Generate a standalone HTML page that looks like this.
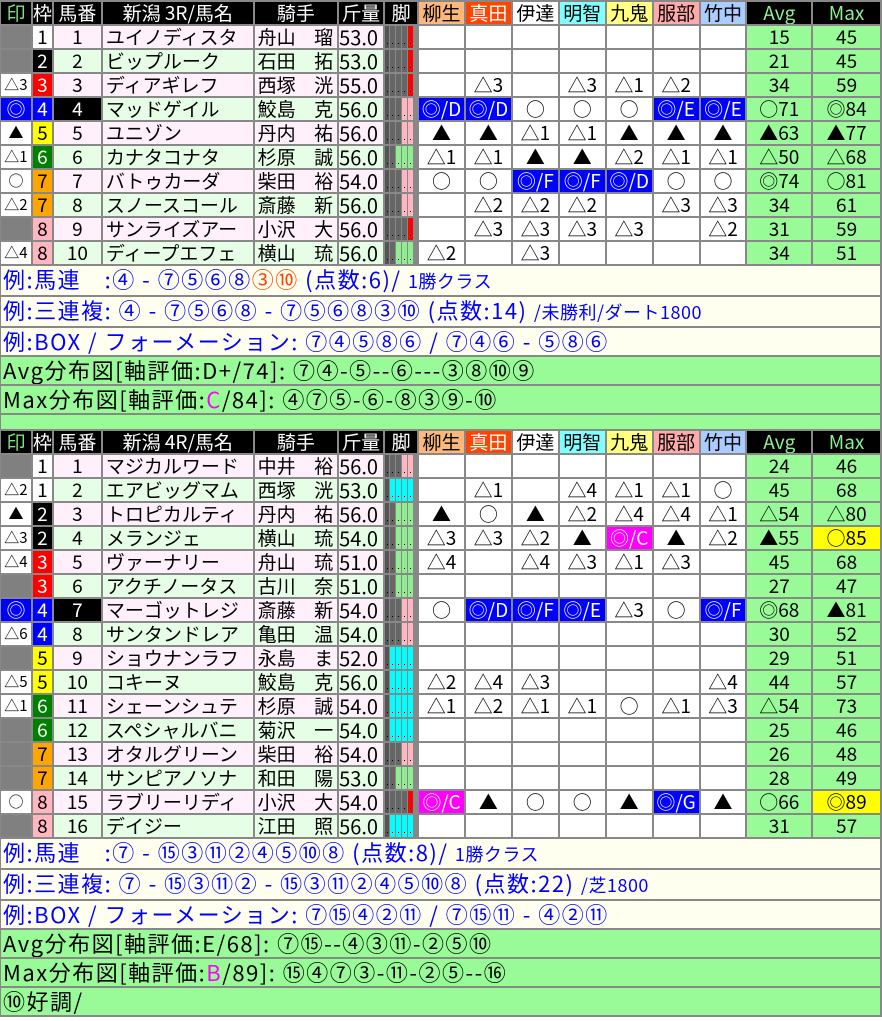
<!DOCTYPE html>
<html><head><meta charset="utf-8">
<style>
html,body{margin:0;padding:0;background:#fff;}
body{width:882px;height:1021px;overflow:hidden;font-family:"Liberation Sans","Noto Sans CJK JP",sans-serif;}
table{border-collapse:separate;border-spacing:2px;background:#888;table-layout:fixed;margin:0 0 0 -1px;font-family:"Noto Sans CJK JP","Liberation Sans",sans-serif;}
td{padding:0;height:22px;line-height:22px;font-size:19px;text-align:center;white-space:nowrap;overflow:hidden;color:#000;background:#fff;}
tr.h td{background:#000;color:#fff;}
tr.h td.gi{color:#7fe07f;}
tr.h td.ga{color:#90ee90;}
td.y1{background:#fbb87a!important;color:#000!important}
td.y2{background:#ff4500!important;color:#fff!important}
td.y3{background:#fff!important;color:#000!important}
td.y4{background:#80ffff!important;color:#000!important}
td.y5{background:#ffff80!important;color:#000!important}
td.y6{background:#ffaaaa!important;color:#000!important}
td.y7{background:#aaccff!important;color:#000!important}
td.m{font-size:15px;}
td.m0{background:#808080;}
td.mb{background:#00f;color:#fff;font-size:19px;}
td.w1{background:#fff}
td.w2{background:#000;color:#fff}
td.w3{background:#f00;color:#fff}
td.w4{background:#00f;color:#fff}
td.w5{background:#ff0}
td.w6{background:#008000;color:#fff}
td.w7{background:#ffa500}
td.w8{background:#ffb6c1}
tr.p td.n,tr.p td.nm,tr.p td.j,tr.p td.wt{background:#fff0fc}
tr.g td.n,tr.g td.nm,tr.g td.j,tr.g td.wt{background:#e6fde6}
td.nb{background:#000!important;color:#fff}
td.nm{text-align:left;padding-left:3px;}
td.j{text-align:left;padding-left:3px;}
td.j span{float:right;padding-right:4px;}
td.wt{text-align:left;font-size:20px;}
td.lg{background:#888;text-align:left;font-size:0;line-height:0;}
td.lg i{display:inline-block;width:5px;height:22px;margin-right:1px;background:#666;position:relative;}
td.lg i:first-child{width:4px;background:#555}
td.lg i::after{content:"";position:absolute;left:2px;bottom:4px;width:1px;height:1px;background:#000;}
td.R i:nth-child(5){background:#f00}
td.P i:nth-child(n+4){background:#ffb6c1}
td.G i:nth-child(n+3){background:#90ee90}
td.C i:nth-child(n+2){background:#00ffff}
td.eb{background:#00f;color:#fff}
td.em{background:#f0f;color:#fff}
td.av,td.mx{background:#98fb98}
td.yl{background:#ff0}
td.i1{background:#fffff0;color:#00f;text-align:left;font-size:22px;height:27px;line-height:27px;padding-left:2px;letter-spacing:1.5px}
td.i2{background:#98fb98;color:#000;text-align:left;font-size:22px;height:27px;line-height:27px;padding-left:2px;letter-spacing:1.5px}
td.i3{background:#98fb98;height:14px;line-height:14px}
.sm{font-size:18px;letter-spacing:0.5px}
.rd{color:#ff4500}
.mg{color:#f0f}
</style></head><body>
<table>
<colgroup><col style="width:30px"><col style="width:17px"><col style="width:47px"><col style="width:150px"><col style="width:83px"><col style="width:44px"><col style="width:32px"><col style="width:45px"><col style="width:45px"><col style="width:45px"><col style="width:45px"><col style="width:45px"><col style="width:45px"><col style="width:45px"><col style="width:64px"><col style="width:67px"></colgroup>
<tr class="h"><td class="gi">印</td><td>枠</td><td>馬番</td><td>新潟 3R/馬名</td><td>騎手</td><td>斤量</td><td>脚</td><td class="y1">柳生</td><td class="y2">真田</td><td class="y3">伊達</td><td class="y4">明智</td><td class="y5">九鬼</td><td class="y6">服部</td><td class="y7">竹中</td><td class="ga">Avg</td><td class="ga">Max</td></tr>
<tr class="p"><td class="m m0"></td><td class="w1">1</td><td class="n">1</td><td class="nm">ユイノディスタ</td><td class="j">舟山<span>瑠</span></td><td class="wt">53.0</td><td class="lg R"><i></i><i></i><i></i><i></i><i></i></td><td></td><td></td><td></td><td></td><td></td><td></td><td></td><td class="av">15</td><td class="mx">45</td></tr>
<tr class="g"><td class="m m0"></td><td class="w2">2</td><td class="n">2</td><td class="nm">ビップルーク</td><td class="j">石田<span>拓</span></td><td class="wt">53.0</td><td class="lg R"><i></i><i></i><i></i><i></i><i></i></td><td></td><td></td><td></td><td></td><td></td><td></td><td></td><td class="av">21</td><td class="mx">45</td></tr>
<tr class="p"><td class="m">△3</td><td class="w3">3</td><td class="n">3</td><td class="nm">ディアギレフ</td><td class="j">西塚<span>洸</span></td><td class="wt">55.0</td><td class="lg R"><i></i><i></i><i></i><i></i><i></i></td><td></td><td>△3</td><td></td><td>△3</td><td>△1</td><td>△2</td><td></td><td class="av">34</td><td class="mx">59</td></tr>
<tr class="g"><td class="m mb">◎</td><td class="w4">4</td><td class="n nb">4</td><td class="nm">マッドゲイル</td><td class="j">鮫島<span>克</span></td><td class="wt">56.0</td><td class="lg P"><i></i><i></i><i></i><i></i><i></i></td><td class="eb">◎/D</td><td class="eb">◎/D</td><td>○</td><td>○</td><td>○</td><td class="eb">◎/E</td><td class="eb">◎/E</td><td class="av">○71</td><td class="mx">◎84</td></tr>
<tr class="p"><td class="m">▲</td><td class="w5">5</td><td class="n">5</td><td class="nm">ユニゾン</td><td class="j">丹内<span>祐</span></td><td class="wt">56.0</td><td class="lg P"><i></i><i></i><i></i><i></i><i></i></td><td>▲</td><td>▲</td><td>△1</td><td>△1</td><td>▲</td><td>▲</td><td>▲</td><td class="av">▲63</td><td class="mx">▲77</td></tr>
<tr class="g"><td class="m">△1</td><td class="w6">6</td><td class="n">6</td><td class="nm">カナタコナタ</td><td class="j">杉原<span>誠</span></td><td class="wt">56.0</td><td class="lg G"><i></i><i></i><i></i><i></i><i></i></td><td>△1</td><td>△1</td><td>▲</td><td>▲</td><td>△2</td><td>△1</td><td>△1</td><td class="av">△50</td><td class="mx">△68</td></tr>
<tr class="p"><td class="m">○</td><td class="w7">7</td><td class="n">7</td><td class="nm">バトゥカーダ</td><td class="j">柴田<span>裕</span></td><td class="wt">54.0</td><td class="lg P"><i></i><i></i><i></i><i></i><i></i></td><td>○</td><td>○</td><td class="eb">◎/F</td><td class="eb">◎/F</td><td class="eb">◎/D</td><td>○</td><td>○</td><td class="av">◎74</td><td class="mx">○81</td></tr>
<tr class="g"><td class="m">△2</td><td class="w7">7</td><td class="n">8</td><td class="nm">スノースコール</td><td class="j">斎藤<span>新</span></td><td class="wt">56.0</td><td class="lg P"><i></i><i></i><i></i><i></i><i></i></td><td></td><td>△2</td><td>△2</td><td>△2</td><td></td><td>△3</td><td>△3</td><td class="av">34</td><td class="mx">61</td></tr>
<tr class="p"><td class="m m0"></td><td class="w8">8</td><td class="n">9</td><td class="nm">サンライズアー</td><td class="j">小沢<span>大</span></td><td class="wt">56.0</td><td class="lg R"><i></i><i></i><i></i><i></i><i></i></td><td></td><td>△3</td><td>△3</td><td>△3</td><td>△3</td><td></td><td>△2</td><td class="av">31</td><td class="mx">59</td></tr>
<tr class="g"><td class="m">△4</td><td class="w8">8</td><td class="n">10</td><td class="nm">ディープエフェ</td><td class="j">横山<span>琉</span></td><td class="wt">56.0</td><td class="lg G"><i></i><i></i><i></i><i></i><i></i></td><td>△2</td><td></td><td>△3</td><td></td><td></td><td></td><td></td><td class="av">34</td><td class="mx">51</td></tr>
<tr><td colspan="16" class="i1">例:馬連　:④ - ⑦⑤⑥⑧<span class="rd">③⑩</span> (点数:6)/ <span class="sm">1勝クラス</span></td></tr>
<tr><td colspan="16" class="i1">例:三連複: ④ - ⑦⑤⑥⑧ - ⑦⑤⑥⑧③⑩ (点数:14) <span class="sm">/未勝利/ダート1800</span></td></tr>
<tr><td colspan="16" class="i1">例:BOX / フォーメーション: ⑦④⑤⑧⑥ / ⑦④⑥ - ⑤⑧⑥</td></tr>
<tr><td colspan="16" class="i2">Avg分布図[軸評価:D+/74]: ⑦④-⑤--⑥---③⑧⑩⑨</td></tr>
<tr><td colspan="16" class="i2">Max分布図[軸評価:<span class="mg">C</span>/84]: ④⑦⑤-⑥-⑧③⑨-⑩</td></tr>
<tr><td colspan="16" class="i3"></td></tr>
<tr class="h"><td class="gi">印</td><td>枠</td><td>馬番</td><td>新潟 4R/馬名</td><td>騎手</td><td>斤量</td><td>脚</td><td class="y1">柳生</td><td class="y2">真田</td><td class="y3">伊達</td><td class="y4">明智</td><td class="y5">九鬼</td><td class="y6">服部</td><td class="y7">竹中</td><td class="ga">Avg</td><td class="ga">Max</td></tr>
<tr class="p"><td class="m m0"></td><td class="w1">1</td><td class="n">1</td><td class="nm">マジカルワード</td><td class="j">中井<span>裕</span></td><td class="wt">56.0</td><td class="lg P"><i></i><i></i><i></i><i></i><i></i></td><td></td><td></td><td></td><td></td><td></td><td></td><td></td><td class="av">24</td><td class="mx">46</td></tr>
<tr class="g"><td class="m">△2</td><td class="w1">1</td><td class="n">2</td><td class="nm">エアビッグマム</td><td class="j">西塚<span>洸</span></td><td class="wt">53.0</td><td class="lg C"><i></i><i></i><i></i><i></i><i></i></td><td></td><td>△1</td><td></td><td>△4</td><td>△1</td><td>△1</td><td>○</td><td class="av">45</td><td class="mx">68</td></tr>
<tr class="p"><td class="m">▲</td><td class="w2">2</td><td class="n">3</td><td class="nm">トロピカルティ</td><td class="j">丹内<span>祐</span></td><td class="wt">56.0</td><td class="lg G"><i></i><i></i><i></i><i></i><i></i></td><td>▲</td><td>○</td><td>▲</td><td>△2</td><td>△4</td><td>△4</td><td>△1</td><td class="av">△54</td><td class="mx">△80</td></tr>
<tr class="g"><td class="m">△3</td><td class="w2">2</td><td class="n">4</td><td class="nm">メランジェ</td><td class="j">横山<span>琉</span></td><td class="wt">54.0</td><td class="lg G"><i></i><i></i><i></i><i></i><i></i></td><td>△3</td><td>△3</td><td>△2</td><td>▲</td><td class="em">◎/C</td><td>▲</td><td>△2</td><td class="av">▲55</td><td class="mx yl">○85</td></tr>
<tr class="p"><td class="m">△4</td><td class="w3">3</td><td class="n">5</td><td class="nm">ヴァーナリー</td><td class="j">舟山<span>琉</span></td><td class="wt">51.0</td><td class="lg G"><i></i><i></i><i></i><i></i><i></i></td><td>△4</td><td></td><td>△4</td><td>△3</td><td>△1</td><td>△3</td><td></td><td class="av">45</td><td class="mx">68</td></tr>
<tr class="g"><td class="m m0"></td><td class="w3">3</td><td class="n">6</td><td class="nm">アクチノータス</td><td class="j">古川<span>奈</span></td><td class="wt">51.0</td><td class="lg G"><i></i><i></i><i></i><i></i><i></i></td><td></td><td></td><td></td><td></td><td></td><td></td><td></td><td class="av">27</td><td class="mx">47</td></tr>
<tr class="p"><td class="m mb">◎</td><td class="w4">4</td><td class="n nb">7</td><td class="nm">マーゴットレジ</td><td class="j">斎藤<span>新</span></td><td class="wt">54.0</td><td class="lg P"><i></i><i></i><i></i><i></i><i></i></td><td>○</td><td class="eb">◎/D</td><td class="eb">◎/F</td><td class="eb">◎/E</td><td>△3</td><td>○</td><td class="eb">◎/F</td><td class="av">◎68</td><td class="mx">▲81</td></tr>
<tr class="g"><td class="m">△6</td><td class="w4">4</td><td class="n">8</td><td class="nm">サンタンドレア</td><td class="j">亀田<span>温</span></td><td class="wt">54.0</td><td class="lg P"><i></i><i></i><i></i><i></i><i></i></td><td></td><td></td><td></td><td></td><td></td><td></td><td></td><td class="av">30</td><td class="mx">52</td></tr>
<tr class="p"><td class="m m0"></td><td class="w5">5</td><td class="n">9</td><td class="nm">ショウナンラフ</td><td class="j">永島<span>ま</span></td><td class="wt">52.0</td><td class="lg C"><i></i><i></i><i></i><i></i><i></i></td><td></td><td></td><td></td><td></td><td></td><td></td><td></td><td class="av">29</td><td class="mx">51</td></tr>
<tr class="g"><td class="m">△5</td><td class="w5">5</td><td class="n">10</td><td class="nm">コキーヌ</td><td class="j">鮫島<span>克</span></td><td class="wt">56.0</td><td class="lg C"><i></i><i></i><i></i><i></i><i></i></td><td>△2</td><td>△4</td><td>△3</td><td></td><td></td><td></td><td>△4</td><td class="av">44</td><td class="mx">57</td></tr>
<tr class="p"><td class="m">△1</td><td class="w6">6</td><td class="n">11</td><td class="nm">シェーンシュテ</td><td class="j">杉原<span>誠</span></td><td class="wt">54.0</td><td class="lg C"><i></i><i></i><i></i><i></i><i></i></td><td>△1</td><td>△2</td><td>△1</td><td>△1</td><td>○</td><td>△1</td><td>△3</td><td class="av">△54</td><td class="mx">73</td></tr>
<tr class="g"><td class="m m0"></td><td class="w6">6</td><td class="n">12</td><td class="nm">スペシャルバニ</td><td class="j">菊沢<span>一</span></td><td class="wt">54.0</td><td class="lg C"><i></i><i></i><i></i><i></i><i></i></td><td></td><td></td><td></td><td></td><td></td><td></td><td></td><td class="av">25</td><td class="mx">46</td></tr>
<tr class="p"><td class="m m0"></td><td class="w7">7</td><td class="n">13</td><td class="nm">オタルグリーン</td><td class="j">柴田<span>裕</span></td><td class="wt">54.0</td><td class="lg P"><i></i><i></i><i></i><i></i><i></i></td><td></td><td></td><td></td><td></td><td></td><td></td><td></td><td class="av">26</td><td class="mx">48</td></tr>
<tr class="g"><td class="m m0"></td><td class="w7">7</td><td class="n">14</td><td class="nm">サンピアノソナ</td><td class="j">和田<span>陽</span></td><td class="wt">53.0</td><td class="lg G"><i></i><i></i><i></i><i></i><i></i></td><td></td><td></td><td></td><td></td><td></td><td></td><td></td><td class="av">28</td><td class="mx">49</td></tr>
<tr class="p"><td class="m">○</td><td class="w8">8</td><td class="n">15</td><td class="nm">ラブリーリディ</td><td class="j">小沢<span>大</span></td><td class="wt">54.0</td><td class="lg R"><i></i><i></i><i></i><i></i><i></i></td><td class="em">◎/C</td><td>▲</td><td>○</td><td>○</td><td>▲</td><td class="eb">◎/G</td><td>▲</td><td class="av">○66</td><td class="mx yl">◎89</td></tr>
<tr class="g"><td class="m m0"></td><td class="w8">8</td><td class="n">16</td><td class="nm">デイジー</td><td class="j">江田<span>照</span></td><td class="wt">56.0</td><td class="lg C"><i></i><i></i><i></i><i></i><i></i></td><td></td><td></td><td></td><td></td><td></td><td></td><td></td><td class="av">31</td><td class="mx">57</td></tr>
<tr><td colspan="16" class="i1">例:馬連　:⑦ - ⑮③⑪②④⑤⑩⑧ (点数:8)/ <span class="sm">1勝クラス</span></td></tr>
<tr><td colspan="16" class="i1">例:三連複: ⑦ - ⑮③⑪② - ⑮③⑪②④⑤⑩⑧ (点数:22) <span class="sm">/芝1800</span></td></tr>
<tr><td colspan="16" class="i1">例:BOX / フォーメーション: ⑦⑮④②⑪ / ⑦⑮⑪ - ④②⑪</td></tr>
<tr><td colspan="16" class="i2">Avg分布図[軸評価:E/68]: ⑦⑮--④③⑪-②⑤⑩</td></tr>
<tr><td colspan="16" class="i2">Max分布図[軸評価:<span class="mg">B</span>/89]: ⑮④⑦③-⑪-②⑤--⑯</td></tr>
<tr><td colspan="16" class="i2">⑩好調/</td></tr>
</table>
</body></html>
